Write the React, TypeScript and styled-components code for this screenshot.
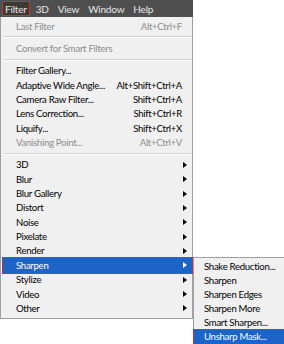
import React from "react";
import styled, { createGlobalStyle } from "styled-components";

const GlobalStyle = createGlobalStyle`
	body {
		margin: 0;
		background: #fff;
		font-family: Lato, "Noto Sans", sans-serif;
		font-size: 9.6px;
		letter-spacing: -0.3px;
	}
`;

const Page = styled.div`
	width: 284px;
	height: 344px;
	position: relative;
	overflow: hidden;
`;

const MenuBar = styled.div`
	display: flex;
	align-items: center;
	width: 193px;
	height: 17px;
	background: #4f4f4f;
	padding-left: 2px;
	box-sizing: border-box;
`;

const BarItem = styled.div<{ active?: boolean }>`
	height: 15px;
	display: flex;
	align-items: center;
	padding: 0 2px;
	margin-right: 3px;
	box-sizing: border-box;
	color: #e6e6e6;
	font-size: 10px;
	letter-spacing: -0.2px;
	background: ${(p) => (p.active ? "#3a3a3a" : "transparent")};
	border: 1px solid ${(p) => (p.active ? "#c0392b" : "transparent")};
`;

const Menu = styled.div`
	width: 193px;
	box-sizing: border-box;
	background: #f0f0f0;
	border: 1px solid #a0a0a0;
	border-top: none;
	padding: 2px 0 2px 2px;
	display: flex;
	flex-direction: column;
`;

const Row = styled.div<{ disabled?: boolean; selected?: boolean }>`
	position: relative;
	height: 14.35px;
	display: flex;
	align-items: center;
	padding: 0 10px 0 13px;
	box-sizing: border-box;
	color: ${(p) => (p.selected ? "#fff" : p.disabled ? "#8d8d8d" : "#000")};
	background: ${(p) => (p.selected ? "#1c64c8" : "transparent")};
	outline: ${(p) => (p.selected ? "1px solid #c0304a" : "none")};
	white-space: nowrap;
`;

const Label = styled.span`
	flex: 1;
`;

const Shortcut = styled.span`
	text-align: right;
`;

const Arrow = styled.span<{ light?: boolean }>`
	width: 0;
	height: 0;
	border-top: 3.5px solid transparent;
	border-bottom: 3.5px solid transparent;
	border-left: 4px solid ${(p) => (p.light ? "#fff" : "#000")};
	margin-right: -5px;
`;

const Separator = styled.div`
	height: 1px;
	margin: 3px 0 3px 0;
	background: #d5d5d5;
	border-bottom: 1px solid #fff;
`;

const SubMenu = styled.div`
	position: absolute;
	left: 190px;
	top: -1px;
	width: 92px;
	box-sizing: border-box;
	background: #f0f0f0;
	border: 1px solid #a0a0a0;
	padding: 1px 0 1px 0;
	display: flex;
	flex-direction: column;
`;

const SubRow = styled(Row)`
	height: 14.1px;
	padding-left: 10px;
`;

type Item = { label: string; shortcut?: string; disabled?: boolean };

const topItems: Item[][] = [
	[{ label: "Last Filter", shortcut: "Alt+Ctrl+F", disabled: true }],
	[{ label: "Convert for Smart Filters", disabled: true }],
	[
		{ label: "Filter Gallery..." },
		{ label: "Adaptive Wide Angle...", shortcut: "Alt+Shift+Ctrl+A" },
		{ label: "Camera Raw Filter...", shortcut: "Shift+Ctrl+A" },
		{ label: "Lens Correction...", shortcut: "Shift+Ctrl+R" },
		{ label: "Liquify...", shortcut: "Shift+Ctrl+X" },
		{ label: "Vanishing Point...", shortcut: "Alt+Ctrl+V", disabled: true },
	],
];

const groups = ["3D", "Blur", "Blur Gallery", "Distort", "Noise", "Pixelate", "Render", "Sharpen", "Stylize", "Video", "Other"];

const sharpenItems = ["Shake Reduction...", "Sharpen", "Sharpen Edges", "Sharpen More", "Smart Sharpen...", "Unsharp Mask..."];

export default function App() {
	return (
		<Page>
			<GlobalStyle />
			<MenuBar>
				<BarItem active>Filter</BarItem>
				<BarItem>3D</BarItem>
				<BarItem>View</BarItem>
				<BarItem>Window</BarItem>
				<BarItem>Help</BarItem>
			</MenuBar>
			<Menu>
				{topItems.map((group, i) => (
					<React.Fragment key={i}>
						{group.map((item) => (
							<Row key={item.label} disabled={item.disabled}>
								<Label>{item.label}</Label>
								{item.shortcut && <Shortcut>{item.shortcut}</Shortcut>}
							</Row>
						))}
						<Separator />
					</React.Fragment>
				))}
				{groups.map((g) => (
					<Row key={g} selected={g === "Sharpen"}>
						<Label>{g}</Label>
						<Arrow light={g === "Sharpen"} />
						{g === "Sharpen" && (
							<SubMenu>
								{sharpenItems.map((s) => (
									<SubRow key={s} selected={s === "Unsharp Mask..."}>
										<Label>{s}</Label>
									</SubRow>
								))}
							</SubMenu>
						)}
					</Row>
				))}
			</Menu>
		</Page>
	);
}
